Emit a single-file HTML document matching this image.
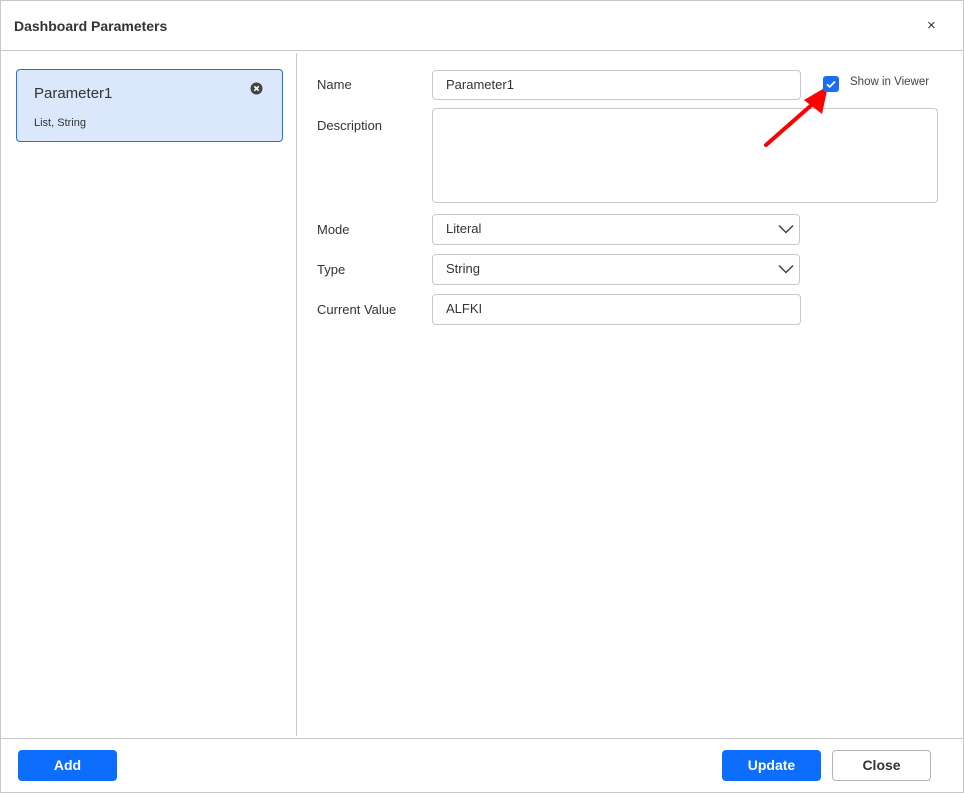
<!DOCTYPE html>
<html><head><style>
*{box-sizing:border-box;margin:0;padding:0}
body{width:964px;height:793px;background:#fff;font-family:"Liberation Sans",Arial,sans-serif;color:#333;position:relative;overflow:hidden}
.a{position:absolute}
.frame{left:0;top:0;width:964px;height:793px;border:1px solid #c8c8c8}
.lbl{font-size:13px;color:#333}
.inp{border:1px solid #c8c8c8;border-radius:4px;background:#fff;font-size:13px;color:#333;padding-left:13px;line-height:28px}
.btn{border-radius:4px;font-size:14px;font-weight:bold;text-align:center;line-height:30px}
</style></head><body>
<div class="a frame"></div>
<div class="a" style="left:14px;top:18px;font-size:14px;font-weight:bold;color:#333">Dashboard Parameters</div>
<div class="a" style="left:927px;top:17px;font-size:15px;color:#333">×</div>
<div class="a" style="left:1px;top:50px;width:962px;height:1px;background:#c8c8c8"></div>
<div class="a" style="left:296px;top:53px;width:1px;height:683px;background:#c8c8c8"></div>
<div class="a" style="left:1px;top:738px;width:962px;height:1px;background:#c8c8c8"></div>

<div class="a" style="left:16px;top:69px;width:267px;height:73px;background:#dbe8fb;border:1px solid #1a73e8;border-radius:4px"></div>
<div class="a" style="left:34px;top:85px;font-size:15px;color:#333">Parameter1</div>
<div class="a" style="left:34px;top:117px;font-size:11px;color:#333">List, String</div>
<svg class="a" style="left:250px;top:82px" width="13" height="13" viewBox="0 0 13 13"><circle cx="6.5" cy="6.5" r="6" fill="#444"/><path d="M4.3 4.3l4.4 4.4M8.7 4.3l-4.4 4.4" stroke="#fff" stroke-width="1.6"/></svg>

<div class="a lbl" style="left:317px;top:77px">Name</div>
<div class="a inp" style="left:432px;top:70px;width:369px;height:30px">Parameter1</div>
<div class="a" style="left:850px;top:76px;font-size:11.5px;color:#444">Show in Viewer</div>

<div class="a lbl" style="left:317px;top:118px">Description</div>
<div class="a inp" style="left:432px;top:108px;width:506px;height:95px"></div>

<svg class="a" style="left:760px;top:80px" width="80" height="70" viewBox="0 0 80 70"><path d="M6 65L55 22" stroke="#f00" stroke-width="4" stroke-linecap="round"/><path d="M44 20L68 6L62 34Z" fill="#f00"/></svg>
<div class="a" style="left:823px;top:76px;width:16px;height:16px;background:#1a6ef5;border-radius:3px"></div>
<svg class="a" style="left:823px;top:76px" width="16" height="16" viewBox="0 0 16 16"><path d="M4 8.3l2.7 2.6L12 5.5" stroke="#fff" stroke-width="1.8" fill="none"/></svg>

<div class="a lbl" style="left:317px;top:222px">Mode</div>
<div class="a inp" style="left:432px;top:214px;width:368px;height:31px">Literal</div>
<svg class="a" style="left:778px;top:224px" width="16" height="10" viewBox="0 0 16 10"><path d="M1 1.5l7 7 7-7" stroke="#444" stroke-width="1.5" fill="none"/></svg>

<div class="a lbl" style="left:317px;top:262px">Type</div>
<div class="a inp" style="left:432px;top:254px;width:368px;height:31px">String</div>
<svg class="a" style="left:778px;top:264px" width="16" height="10" viewBox="0 0 16 10"><path d="M1 1.5l7 7 7-7" stroke="#444" stroke-width="1.5" fill="none"/></svg>

<div class="a lbl" style="left:317px;top:302px">Current Value</div>
<div class="a inp" style="left:432px;top:294px;width:369px;height:31px">ALFKI</div>

<div class="a btn" style="left:18px;top:750px;width:99px;height:31px;background:#0d6efd;color:#fff">Add</div>
<div class="a btn" style="left:722px;top:750px;width:99px;height:31px;background:#0d6efd;color:#fff">Update</div>
<div class="a btn" style="left:832px;top:750px;width:99px;height:31px;background:#fff;border:1px solid #b4b4b4;color:#333;line-height:29px">Close</div>
</body></html>
